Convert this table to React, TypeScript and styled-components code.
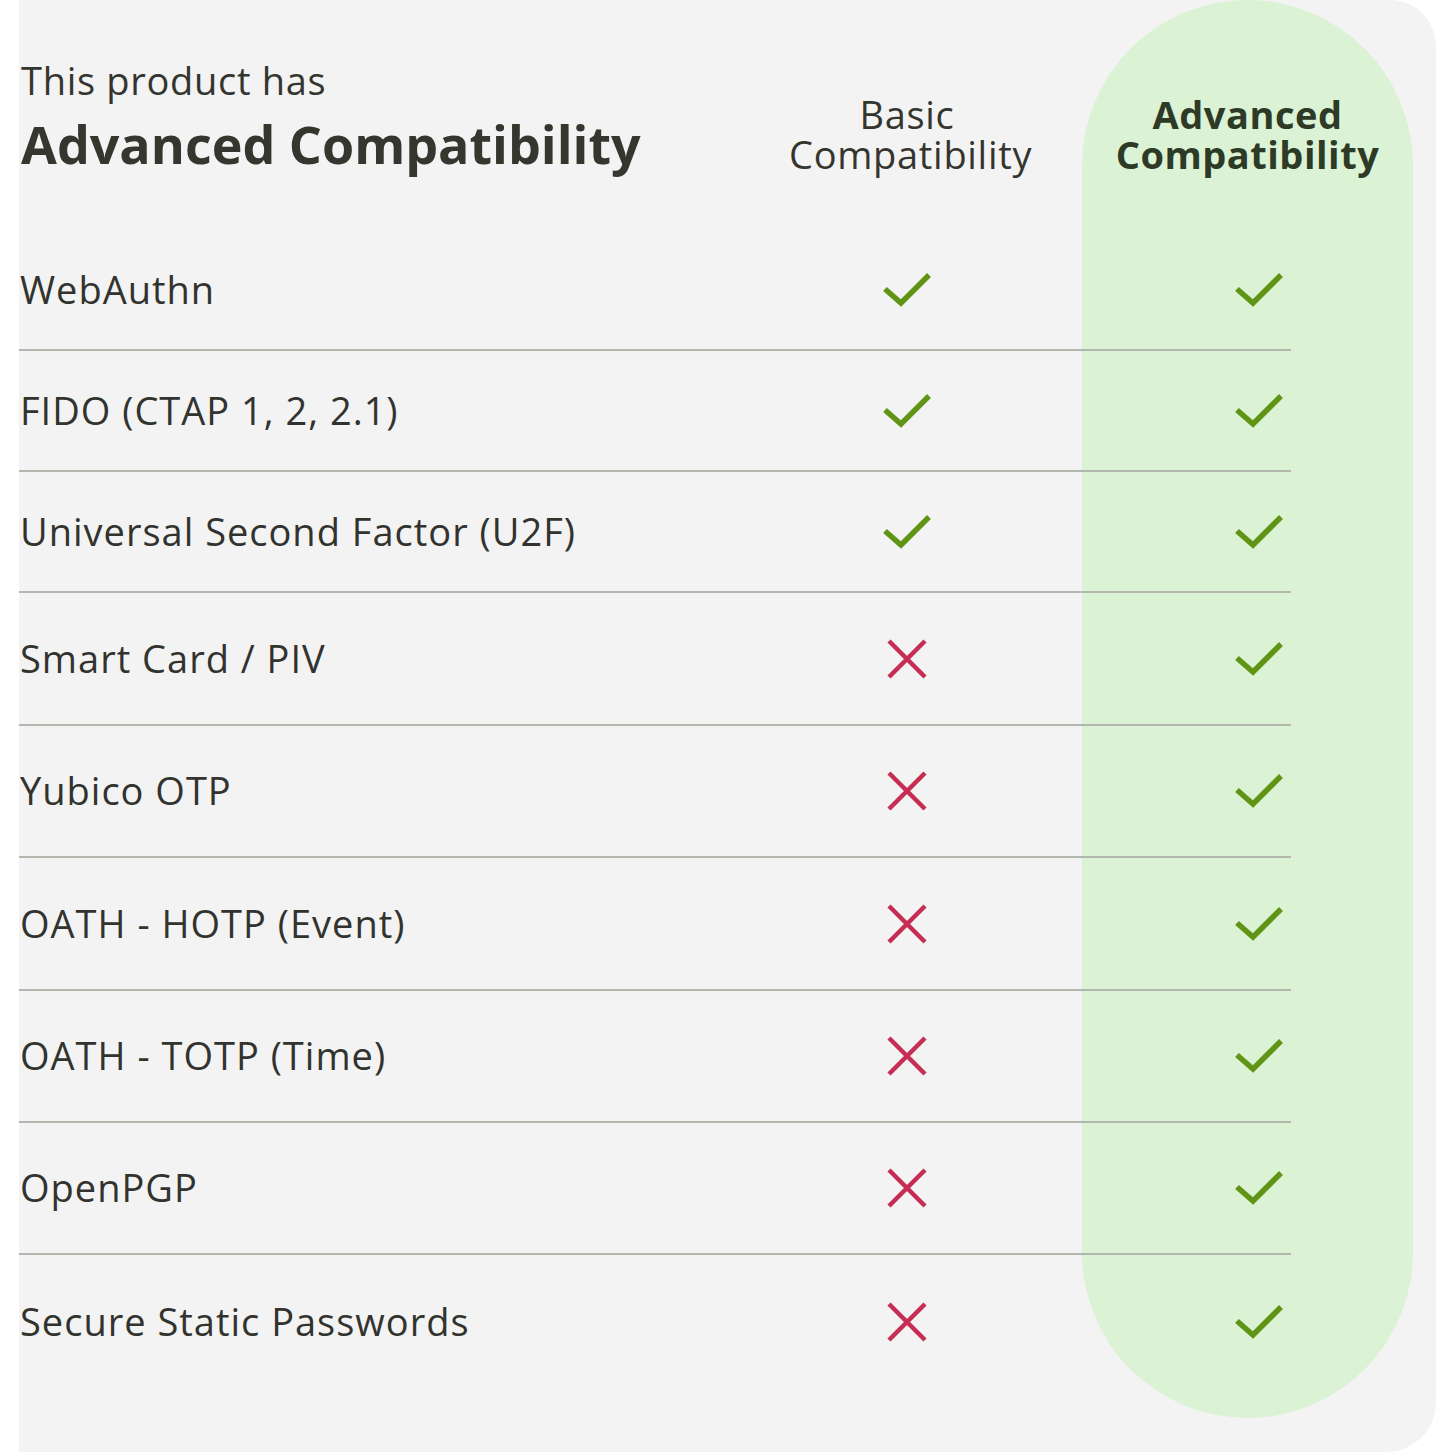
import styled, { createGlobalStyle } from "styled-components";

const Global = createGlobalStyle`
  body {
    margin: 0;
    background: #ffffff;
    font-family: "Open Sans", "Noto Sans", sans-serif;
  }
`;

const Card = styled.div`
  margin-left: 19px;
  width: 1417px;
  height: 1452px;
  background: #f3f3f3;
  border-radius: 0 46px 50px 0;
  display: grid;
  grid-template-columns: 1063px 331px 1fr;
  overflow: hidden;
`;

// green highlight behind the advanced column
const Pill = styled.div`
  grid-area: 1 / 2 / 2 / 3;
  height: 1418px;
  border-radius: 166px;
  background: #dcf2d5;
`;

const Content = styled.div`
  grid-area: 1 / 1 / 2 / 4;
  z-index: 1;
  display: flex;
  flex-direction: column;
`;

const Header = styled.div`
  height: 230px;
  display: grid;
  grid-template-columns: 770px 236px 57px 331px;
`;

const TitleBlock = styled.div`
  padding-top: 56px;
  padding-left: 2px;
`;

const Lead = styled.div`
  font-size: 38px;
  line-height: 48px;
  letter-spacing: 0.7px;
  color: #34352f;
`;

const Title = styled.div`
  margin-top: 8px;
  font-size: 52px;
  font-weight: 700;
  line-height: 64px;
  color: #35362d;
`;

const ColHead = styled.div<{ $strong?: boolean; $col: number }>`
  grid-column: ${(p) => p.$col};
  padding-top: 94px;
  text-align: center;
  font-size: 38px;
  line-height: 40px;
  white-space: nowrap;
  letter-spacing: ${(p) => (p.$strong ? "0.5px" : "0.7px")};
  font-weight: ${(p) => (p.$strong ? 700 : 400)};
  color: ${(p) => (p.$strong ? "#2d3b26" : "#34352f")};
`;

const HeadLine = styled.div`
  height: 40px;
`;

const Row = styled.div<{ $h: number; $last?: boolean }>`
  box-sizing: border-box;
  width: 1272px;
  height: ${(p) => p.$h}px;
  border-bottom: ${(p) => (p.$last ? "none" : "2px solid #b4b7ae")};
  display: grid;
  grid-template-columns: 770px 236px 1fr;
  align-items: center;
`;

const Label = styled.div`
  padding-left: 1px;
  padding-bottom: 2px;
  font-size: 38px;
  letter-spacing: 1px;
  color: #32332e;
`;

const Basic = styled.div`
  justify-self: center;
  display: flex;
`;

const Adv = styled.div`
  justify-self: end;
  margin-right: 8px;
  display: flex;
`;

function Check() {
  return (
    <svg width="48" height="36" viewBox="0 0 48 36">
      <polyline
        points="2,17 18,31 46,3"
        fill="none"
        stroke="#5f9414"
        strokeWidth="5.5"
        strokeLinejoin="miter"
      />
    </svg>
  );
}

function Cross() {
  return (
    <svg width="42" height="42" viewBox="0 0 42 42">
      <path
        d="M3 3 L39 39 M39 3 L3 39"
        fill="none"
        stroke="#c72c52"
        strokeWidth="4.5"
      />
    </svg>
  );
}

const rows: { name: string; basic: boolean; h: number }[] = [
  { name: "WebAuthn", basic: true, h: 121 },
  { name: "FIDO (CTAP 1, 2, 2.1)", basic: true, h: 121 },
  { name: "Universal Second Factor (U2F)", basic: true, h: 121 },
  { name: "Smart Card / PIV", basic: false, h: 133 },
  { name: "Yubico OTP", basic: false, h: 132 },
  { name: "OATH - HOTP (Event)", basic: false, h: 133 },
  { name: "OATH - TOTP (Time)", basic: false, h: 132 },
  { name: "OpenPGP", basic: false, h: 132 },
  { name: "Secure Static Passwords", basic: false, h: 133 },
];

export default function App() {
  return (
    <>
      <Global />
      <Card>
        <Pill />
        <Content>
          <Header>
            <TitleBlock>
              <Lead>This product has</Lead>
              <Title>Advanced Compatibility</Title>
            </TitleBlock>
            <ColHead $col={2}>
              <HeadLine>Basic</HeadLine>
              <HeadLine>Compatibility</HeadLine>
            </ColHead>
            <ColHead $col={4} $strong>
              <HeadLine>Advanced</HeadLine>
              <HeadLine>Compatibility</HeadLine>
            </ColHead>
          </Header>
          {rows.map((r, i) => (
            <Row key={r.name} $h={r.h} $last={i === rows.length - 1}>
              <Label>{r.name}</Label>
              <Basic>{r.basic ? <Check /> : <Cross />}</Basic>
              <Adv>
                <Check />
              </Adv>
            </Row>
          ))}
        </Content>
      </Card>
    </>
  );
}
